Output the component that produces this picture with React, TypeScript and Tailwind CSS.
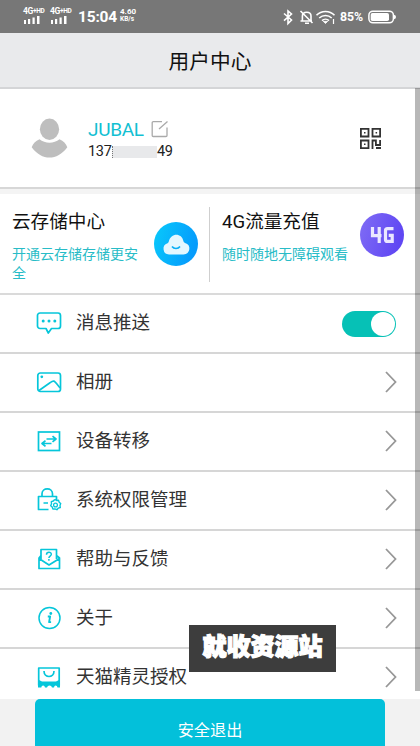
import React from "react";

const CYAN = "#06c6da";

function Signal() {
  return (
    <div className="flex w-[24px] flex-col">
      <span className="whitespace-nowrap text-[8.5px] font-bold leading-[7px] tracking-[-0.3px]">
        4G<span className="align-[1px] text-[6.5px]">+HD</span>
      </span>
      <svg className="mt-[1px]" width="18" height="8" viewBox="0 0 18 8" fill="white">
        <rect x="1" y="4" width="2" height="4" />
        <rect x="5" y="3" width="2.2" height="5" />
        <rect x="9.5" y="1.5" width="2.2" height="6.5" />
        <rect x="14" y="0" width="2.5" height="8" />
      </svg>
    </div>
  );
}

function StatusBar() {
  return (
    <div className="flex h-[33px] shrink-0 items-center bg-[#777777] font-['Roboto','Liberation_Sans',sans-serif] text-white">
      <div className="ml-[23px] flex gap-[3px] pb-[2px]">
        <Signal />
        <Signal />
      </div>
      <span className="ml-[4px] w-[39px] text-[15.5px] font-bold leading-[20px] tracking-[-0.2px]">15:04</span>
      <div className="ml-[3px] flex w-[20px] flex-col pb-[2px] text-[8px] font-bold leading-[7.5px]">
        <span>4.60</span>
        <span className="text-[6.5px] leading-[7px]">KB/s</span>
      </div>
      <svg className="ml-auto" width="75" height="18" viewBox="0 0 75 18" fill="none" stroke="white" strokeWidth="1.6">
        <path d="M4 5.5l7.5 6.5L8 15.5V3l3.5 3L4 12.7" />
        <path d="M22.4 12.5V8c0-5 8.6-5 8.6 0v4.5M20.5 13h11.500M25 15.300h4M20.5 3l12 12" />
        <path d="M36.500 7.300c5-5 13-5 18 0M39.200 10c3.700-3.300 9-3.300 12.500 0M42 12.600c2-1.800 5-1.800 7 0" />
        <path d="M43.2 13.300h4.500l-2.200 2.200z" fill="white" strokeWidth="0.8" />
        <path d="M53.500 11v5" strokeWidth="1.200" />
      </svg>
      <span className="-ml-[15px] w-[25px] text-[12.3px] font-bold leading-[16px]">85%</span>
      <svg className="ml-[3px] mr-[23px]" width="29" height="14" viewBox="0 0 29 14">
        <rect x="0.9" y="1.2" width="24.500" height="11.600" rx="4" fill="none" stroke="white" strokeWidth="1.5" />
        <rect x="2.700" y="3" width="18.300" height="8" rx="1.8" fill="white" />
        <path d="M26 4.700q2 .2 2 2.300t-2 2.300z" fill="white" />
      </svg>
    </div>
  );
}

function Profile() {
  return (
    <section className="flex h-[100px] shrink-0 items-center border-b-2 border-[#d7d7d7] bg-white">
      <svg className="ml-[31px] mt-[1px]" width="37" height="41" viewBox="0 0 37 41" fill="#bebebe">
        <ellipse cx="18.5" cy="11.2" rx="9.6" ry="10.7" />
        <path d="M8.5 21.2c5.5 4.6 14.5 4.6 20 0 4 1.700 6.500 4.300 7.800 8C26 43 11 43 .7 29.200c1.300-3.700 3.800-6.300 7.800-8z" />
      </svg>
      <div className="ml-[20px] flex flex-col pt-[4px] font-['Roboto','Liberation_Sans',sans-serif]">
        <div className="flex items-center">
          <span className="w-[58px] text-[19px] leading-[24px] tracking-[-0.3px] text-[#12c0d2]">JUBAL</span>
          <svg className="-mt-[2px] ml-[5px]" width="18" height="18" viewBox="0 0 18 18" fill="none" stroke="#aaa" strokeWidth="1.3">
            <path d="M11 1.700H2.200a1 1 0 00-1 1V15.500a1 1 0 001 1H15a1 1 0 001-1V7.500M8 9l8.500-7.500" />
          </svg>
        </div>
        <div className="flex items-center text-[14.5px] leading-[20px] tracking-[-0.3px] text-[#222]">
          <span className="w-[24px]">137</span>
          <span className="h-[12px] w-[45px] border-l border-dotted border-[#777] bg-[#e8e9eb]" />
          <span>49</span>
        </div>
      </div>
      <svg className="ml-auto mr-[39px]" width="21" height="21" viewBox="0 0 21 21" fill="none" stroke="#333" strokeWidth="1.8">
        <path d="M.9.9h7.600v7.600H.9zM12.500.9h7.600v7.600h-7.600zM.9 12.500h7.600v7.600H.9zM12.500 21v-8.500h3.400V17h4.200v-5M16 20h5" />
        <path d="M4 4h1.500v1.500H4zM15.600 4h1.500v1.500h-1.500zM4 15.600h1.500v1.500H4z" fill="#333" stroke="none" />
      </svg>
    </section>
  );
}

function Services() {
  return (
    <section className="mt-[5px] flex h-[101px] shrink-0 border-b-2 border-[#dadada] bg-white">
      <div className="flex w-[209px] pl-[12px]">
        <div className="w-[130px] pt-[12px]">
          <h2 className="h-[28px] text-[18.6px] leading-[28px] text-[#111]">云存储中心</h2>
          <p className="mt-[10px] text-[14px] leading-[19px] text-[#28bcc7]">开通云存储存储更安全</p>
        </div>
        <svg className="ml-[12px] mt-[28px]" width="44" height="44" viewBox="0 0 44 44">
          <defs>
            <linearGradient id="cloudBg" x1="0" x2="1" y1="0" y2="0.300">
              <stop stopColor="#08cafb" />
              <stop offset="1" stopColor="#069cfc" />
            </linearGradient>
          </defs>
          <circle cx="22" cy="22" r="22" fill="url(#cloudBg)" />
          <path d="M15 32.500a5.800 5.800 0 01-1.500-11.300c.8-.3 1-.8 1.300-1.700 2-9 13-9 14.600-.4.3 1 .8 1.500 1.600 1.800A5.900 5.900 0 0129.500 32.500z" fill="#e4f7ff" />
          <path d="M18 24.500c2 2.700 6 2.700 8 0" fill="none" stroke="#07adf5" strokeWidth="1.600" />
        </svg>
      </div>
      <div className="mt-[13px] h-[75px] w-px bg-[#cfcfcf]" />
      <div className="flex min-w-0 flex-1 pl-[12px]">
        <div className="w-[130px] pt-[12px]">
          <h2 className="flex h-[28px] items-baseline whitespace-nowrap text-[18.6px] leading-[28px] text-[#111]">
            <span className="font-['Roboto']">4G</span>流量充值
          </h2>
          <p className="mt-[10px] text-[14px] leading-[19px] text-[#28bcc7]">随时随地无障碍观看</p>
        </div>
        <svg className="ml-[8px] mt-[19px] shrink-0" width="44" height="44" viewBox="0 0 44 44">
          <defs>
            <linearGradient id="dataBg" x1="0" x2="1" y1="0" y2="0.300">
              <stop stopColor="#806df5" />
              <stop offset="1" stopColor="#6047f3" />
            </linearGradient>
          </defs>
          <circle cx="22" cy="22" r="22" fill="url(#dataBg)" />
          <g fill="none" stroke="#eae7ff" strokeWidth="3.200">
            <path d="M12.500 14v8.700h9M19.200 14v16" />
            <path d="M33.500 15.600h-6a2 2 0 00-2 2v8.800a2 2 0 002 2h4.700v-6h-3.500" />
          </g>
        </svg>
      </div>
    </section>
  );
}

type IconName = "message" | "photo" | "transfer" | "lock" | "help" | "info" | "tmall";

function RowIcon({ name }: { name: IconName }) {
  return (
    <svg width="26" height="26" viewBox="0 0 26 26" fill="none" stroke={CYAN} strokeWidth="1.700" strokeLinejoin="round">
      {name === "message" && (
        <>
          <path d="M4 3h18a2.500 2.500 0 012.500 2.500V16a2.500 2.500 0 01-2.500 2.500h-6.500L12.300 23 10 18.500H4A2.500 2.500 0 011.500 16V5.500A2.500 2.500 0 014 3z" />
          <g fill={CYAN} stroke="none">
            <circle cx="7.200" cy="11" r="1.500" />
            <circle cx="13" cy="11" r="1.500" />
            <circle cx="18.800" cy="11" r="1.500" />
          </g>
        </>
      )}
      {name === "photo" && (
        <>
          <rect x="1.800" y="4" width="22.700" height="18.500" rx="2.500" />
          <circle cx="5.800" cy="7.800" r="1.400" fill={CYAN} stroke="none" />
          <path d="M3 21.500l11-7.800c1.500-1 2.500-1.700 3.800-1.500 1.500.3 3 2.800 6.400 6.800" />
        </>
      )}
      {name === "transfer" && (
        <>
          <rect x="2.500" y="4" width="21" height="18.500" strokeLinejoin="miter" />
          <path d="M10.500 11H20M16.500 8.200l3.500 2.800-3.500 2.800M15.500 15.500H6M9.500 12.700L6 15.500l3.500 2.800" />
        </>
      )}
      {name === "lock" && (
        <>
          <path d="M12.500 22.500H2.500V9.500H20.500V13M6 9.500V6.800C6 .3 16.500.3 16.500 6.800v2.700M7.500 16H12" />
          <path d="M18 13.200l1.200-.7 1.300 1 2-.3.700 2 1.500 1.300-.7 2 .3 2-2.100.7-1.300 1.500-2-.8-2 .2-.7-2-1.500-1.400.8-2-.2-2 2-.7z" strokeWidth="1.400" />
          <circle cx="19.500" cy="18" r="1.900" strokeWidth="1.300" />
        </>
      )}
      {name === "help" && (
        <>
          <path d="M5 13V3.500H20.500V13M5 9.500L3 12v10.500h20.500V12l-3-2.500M3 12.500l10 6.500 10.500-6.500" />
          <path d="M10.500 8.700c0-3.500 5-3.200 4.800-.3-.2 1.700-2.400 1.700-2.400 3.500M12.900 13v1.700" strokeWidth="1.500" />
        </>
      )}
      {name === "info" && (
        <>
          <circle cx="13.500" cy="13" r="10.500" strokeWidth="1.500" />
          <circle cx="14.800" cy="8.500" r="1.400" fill={CYAN} stroke="none" />
          <path d="M11.800 11.500h2.300l-1 5.600h2" strokeWidth="1.900" />
        </>
      )}
      {name === "tmall" && (
        <>
          <path d="M2.700 21.500V4H23.200v17.500" />
          <path d="M8 7c0 7.300 10 7.300 10 0" />
          <path
            d="M2 15.500l4 2h14l4-2V23.500h-2.500q-.3-2-1.800-2t-1.700 2h-2q-.5-2-2.500-2t-2.500 2H9q-.3-2-1.900-2t-1.800 2H2z"
            fill={CYAN}
            stroke="none"
          />
        </>
      )}
    </svg>
  );
}

const rows: { icon: IconName; label: string }[] = [
  { icon: "message", label: "消息推送" },
  { icon: "photo", label: "相册" },
  { icon: "transfer", label: "设备转移" },
  { icon: "lock", label: "系统权限管理" },
  { icon: "help", label: "帮助与反馈" },
  { icon: "info", label: "关于" },
  { icon: "tmall", label: "天猫精灵授权" },
];

export default function App() {
  return (
    <main className="relative flex h-[746px] w-[420px] flex-col overflow-hidden bg-[#f4f4f4] font-['Noto_Sans_CJK_SC',sans-serif]">
      <StatusBar />
      <header className="flex h-[56px] shrink-0 items-center justify-center border-b-2 border-[#d4d5d7] bg-[#e9eaec] text-[20.7px] leading-[30px] text-[#111]">
        <h1>用户中心</h1>
      </header>
      <Profile />
      <Services />
      <div className="flex h-[404px] shrink-0 flex-col overflow-hidden bg-white">
        {rows.map(({ icon, label }) => (
          <div key={icon} className="flex h-[59px] shrink-0 items-center border-b-2 border-[#d6d6d6] pb-[2px] pl-[36px] last:border-b-0 last:pb-[4px]">
            <RowIcon name={icon} />
            <span className="ml-[14px] pb-[3px] text-[18.5px] leading-[28px] text-[#333]">{label}</span>
            {icon === "message" ? (
              <span className="ml-auto mr-[24px] mt-[2px] flex h-[26px] w-[54px] items-center justify-end rounded-full bg-[#06c1b6] pr-[1px]">
                <span className="h-[24px] w-[24px] rounded-full bg-white" />
              </span>
            ) : (
              <svg className="ml-auto mr-[23px]" width="12" height="22" viewBox="0 0 12 22" fill="none" stroke="#979797" strokeWidth="1.800">
                <path d="M1 1l9.500 10L1 21" />
              </svg>
            )}
          </div>
        ))}
      </div>
      <footer className="flex h-[47px] shrink-0 justify-center bg-[#f2f2f2]">
        <button className="h-[60px] w-[350px] shrink-0 rounded-[5px] bg-[#03c0da] text-[16.200px] leading-[58px] text-white">安全退出</button>
      </footer>
      <div className="absolute right-0 top-[88px] h-[603px] w-[5px] bg-black/28" />
      <div className="absolute left-[189px] top-[625px] flex h-[47px] w-[147px] items-center justify-center bg-[#3d3d3d] pb-[8px] text-[24px] font-black leading-[34px] text-white [-webkit-text-stroke:1.2px_white]">
        就收资源站
      </div>
    </main>
  );
}
